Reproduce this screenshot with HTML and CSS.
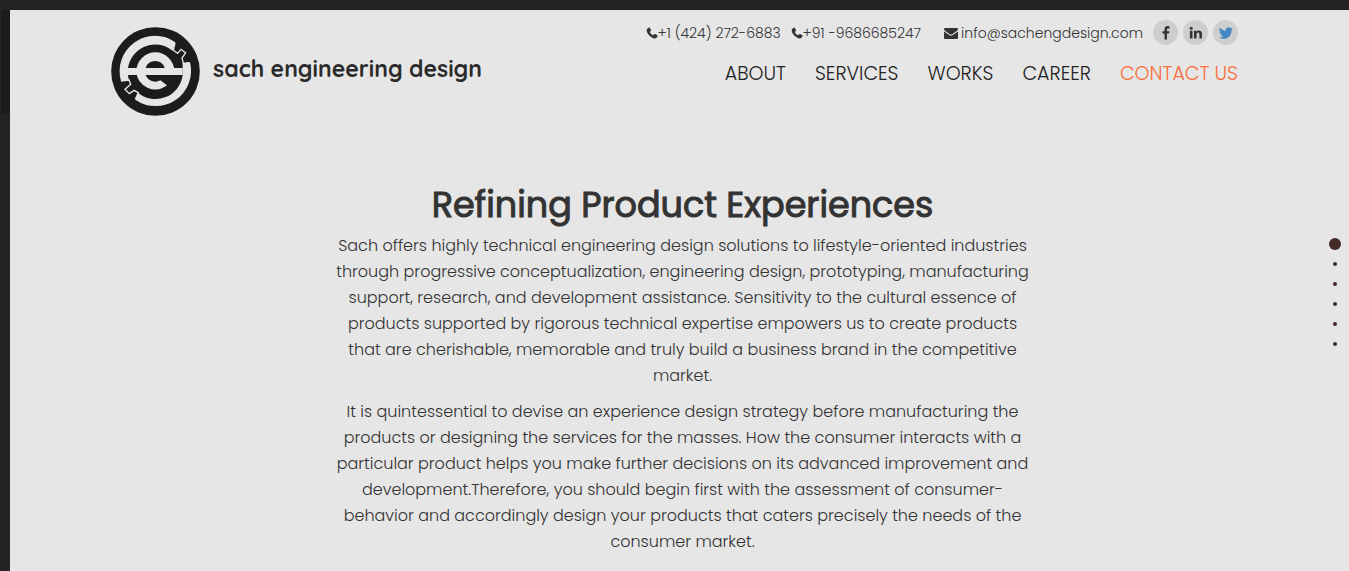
FILE: index.html
```html
<!DOCTYPE html>
<html lang="en">
<head>
    <meta charset="UTF-8">
    <meta name="viewport" content="width=device-width, initial-scale=1.0">
    <title>Sach Engineering Design</title>
    <link rel="stylesheet" href="styles.css">
</head>
<body>
    <div class="side-tab"></div>
    <div class="page">
        <header class="header">
            <a class="logo" href="#">
                <svg class="logo-mark" viewBox="33 21 267 267" aria-hidden="true">
                    <circle cx="166.500" cy="154.500" r="133" fill="#1c1c1c"/>
                    <g fill="#e6e6e6">
                        <path d="M63 183A106 106 0 0 1 226 67L217 92A82 82 0 0 0 84 144H248V165H84Q84 173 88 181Z"/>
                        <path d="M248 129L270 127A106 106 0 0 1 106 239L114 218A82 82 0 0 0 248 165Z"/>
                        <path d="M109 154A57 57 0 0 1 223 154V165H137A31 31 0 0 0 181 181L201 196A57 57 0 0 1 109 154Z"/>
                    </g>
                    <path d="M137 144A30 30 0 0 1 194 144Z" fill="#1c1c1c"/>
                    <path d="M225 69L220 91L233 100L243 88L257 99L246 114L250 130L270 128M63 183L87 180L92 193L75 208L88 221L102 211L115 218L106 238" fill="none" stroke="#e6e6e6" stroke-width="4"/>
                </svg>
                <span class="logo-text">sach engineering design</span>
            </a>
            <div class="header-right">
                <div class="contact">
                    <a class="phone" href="tel:+14242726883"><svg class="icon-phone" viewBox="0 0 12 12"><path d="M1 2L3 .5Q3.500 .3 3.800 .8L5 3Q5.200 3.500 4.800 3.900L3.700 4.900Q4.800 7.100 7.100 8.300L8.300 7.200Q8.700 6.800 9.200 7.100L11.300 8.300Q11.800 8.600 11.500 9.100C11 11 9.400 11.800 7.500 11.200C4 10 1.300 7 .7 4Q.5 2.800 1 2Z"/></svg>+1 (424) 272-6883</a>
                    <a class="phone" href="tel:+919686685247"><svg class="icon-phone" viewBox="0 0 12 12"><path d="M1 2L3 .5Q3.500 .3 3.800 .8L5 3Q5.200 3.500 4.800 3.900L3.700 4.900Q4.800 7.100 7.100 8.300L8.300 7.200Q8.700 6.800 9.200 7.100L11.300 8.300Q11.800 8.600 11.500 9.100C11 11 9.400 11.800 7.500 11.200C4 10 1.300 7 .7 4Q.5 2.800 1 2Z"/></svg>+91 -9686685247</a>
                    <a class="mail" href="mailto:info@sachengdesign.com"><svg class="icon-mail" viewBox="0 0 14 11"><path d="M1 0H13Q14 0 14 1.200Q14 2 13 2.800L8.300 6.200Q7 7 5.700 6.200L1 2.800Q0 2 0 1.200Q0 0 1 0ZM0 3.500L5.200 7.100Q7 8.200 8.800 7.100L14 3.500V10Q14 11 13 11H1Q0 11 0 10Z"/></svg>info@sachengdesign.com</a>
                    <div class="social">
                        <a class="social-link" href="#" aria-label="Facebook"><svg viewBox="0 0 14 14"><path d="M10.500 .3V2.500H9.200Q8 2.500 8 3.600V5.200H10.400L10.100 7.500H8V13.500H5.500V7.500H3.500V5.200H5.500V3.400C5.500 1.300 6.800 .1 8.700 .1Z"/></svg></a>
                        <a class="social-link" href="#" aria-label="LinkedIn"><svg viewBox="0 0 14 14"><circle cx="2.200" cy="2.300" r="1.500"/><path d="M.9 4.700H3.500V12.500H.9ZM5 4.700H7.500V5.800C9 3.700 13 4.100 13 8V12.500H10.400V8.300C10.400 6 7.600 6.100 7.600 8.300V12.500H5Z"/></svg></a>
                        <a class="social-link twitter" href="#" aria-label="Twitter"><svg viewBox="0 0 24 24"><path d="M23.600 4.600A9.600 9.600 0 0 1 21 5.300A4.900 4.900 0 0 0 23 2.700A9.700 9.700 0 0 1 20 3.900A4.900 4.900 0 0 0 11.600 8.400A13.900 13.900 0 0 1 1.600 3.200A4.900 4.900 0 0 0 3.100 9.800A4.800 4.800 0 0 1 .9 9.200A4.900 4.900 0 0 0 4.800 14.100A4.900 4.900 0 0 1 2.600 14.200A4.900 4.900 0 0 0 7.200 17.600A9.900 9.900 0 0 1 0 19.600C10 26 21.800 19 21.500 7.200A10 10 0 0 0 23.600 4.600Z"/></svg></a>
                    </div>
                </div>
                <nav class="nav">
                    <a href="#">ABOUT</a>
                    <a href="#">SERVICES</a>
                    <a href="#">WORKS</a>
                    <a href="#">CAREER</a>
                    <a class="active" href="#">CONTACT US</a>
                </nav>
            </div>
        </header>

        <main class="content">
            <h1>Refining Product Experiences</h1>
            <p>
                Sach offers highly technical engineering design solutions to lifestyle-oriented industries<br>
                through progressive conceptualization, engineering design, prototyping, manufacturing<br>
                support, research, and development assistance. Sensitivity to the cultural essence of<br>
                products supported by rigorous technical expertise empowers us to create products<br>
                that are cherishable, memorable and truly build a business brand in the competitive<br>
                market.
            </p>
            <p>
                It is quintessential to devise an experience design strategy before manufacturing the<br>
                products or designing the services for the masses. How the consumer interacts with a<br>
                particular product helps you make further decisions on its advanced improvement and<br>
                development.Therefore, you should begin first with the assessment of consumer-<br>
                behavior and accordingly design your products that caters precisely the needs of the<br>
                consumer market.
            </p>
        </main>
    </div>

    <nav class="dots" aria-label="Sections">
        <a class="dot current" href="#" aria-label="Section 1"></a>
        <a class="dot" href="#" aria-label="Section 2"></a>
        <a class="dot" href="#" aria-label="Section 3"></a>
        <a class="dot" href="#" aria-label="Section 4"></a>
        <a class="dot" href="#" aria-label="Section 5"></a>
        <a class="dot" href="#" aria-label="Section 6"></a>
    </nav>
</body>
</html>
```
FILE: styles.css
```css
* {
    box-sizing: border-box;
}
body {
    margin: 0;
    padding: 10px 0 0 10px;
    min-height: 100vh;
    display: flex;
    background: #232323;
    color: #333;
    font-family: Poppins, Inter, sans-serif;
    font-size: 16px;
    font-weight: 300;
    overflow: hidden;
}
a {
    color: inherit;
    text-decoration: none;
}
svg {
    fill: currentColor;
}
.side-tab {
    position: absolute;
    left: 1px;
    top: 10px;
    width: 9px;
    height: 104px;
    background: #1b1b1b;
}
.page {
    flex: 1;
    background: #e6e6e6;
}
.header {
    display: flex;
    justify-content: space-between;
    align-items: flex-start;
    padding: 10px 111px 0 101px;
}
.logo {
    display: flex;
    align-items: center;
    gap: 13px;
    padding-top: 7px;
}
.logo-mark {
    width: 89px;
    height: 89px;
}
.logo-text {
    font-family: Quicksand, Inter, sans-serif;
    font-size: 23px;
    font-weight: 700;
    line-height: 28px;
    padding-bottom: 6px;
    color: #2b2b2b;
}
.header-right {
    display: flex;
    flex-direction: column;
    align-items: flex-end;
    gap: 16px;
}
.contact {
    display: flex;
    align-items: flex-start;
    font-size: 14px;
    line-height: 26px;
}
.phone {
    margin-right: 10px;
}
.icon-phone {
    width: 12px;
    height: 12px;
    vertical-align: -1px;
}
.mail {
    margin: 0 10px 0 13px;
}
.icon-mail {
    width: 14px;
    height: 11px;
    margin-right: 3px;
    vertical-align: -1px;
}
.social {
    display: flex;
    gap: 5px;
}
.social-link {
    display: flex;
    align-items: center;
    justify-content: center;
    width: 25px;
    height: 25px;
    border-radius: 50%;
    background: #cecece;
}
.social-link svg {
    width: 14px;
    height: 14px;
}
.social-link.twitter {
    color: #4286c5;
}
.nav {
    display: flex;
    gap: 29px;
    font-size: 19px;
    line-height: 24px;
    color: #222;
}
.nav .active {
    color: #f96e3b;
}
.content {
    padding-top: 69px;
    padding-right: 4px;
    padding-bottom: 10px;
    margin-left: 10px;
    text-align: center;
}
h1 {
    margin: 0 0 8px;
    font-size: 35px;
    font-weight: 400;
    line-height: 40px;
    -webkit-text-stroke: 1px currentColor;
}
p {
    margin: 0 0 10px;
    line-height: 26px;
}
.dots {
    position: fixed;
    right: 4px;
    top: 234px;
    width: 20px;
}
.dot {
    display: flex;
    align-items: center;
    justify-content: center;
    height: 20px;
}
.dot::before {
    content: "";
    width: 4px;
    height: 4px;
    border-radius: 50%;
    background: #452a2a;
}
.dot.current::before {
    width: 12px;
    height: 12px;
}
```
